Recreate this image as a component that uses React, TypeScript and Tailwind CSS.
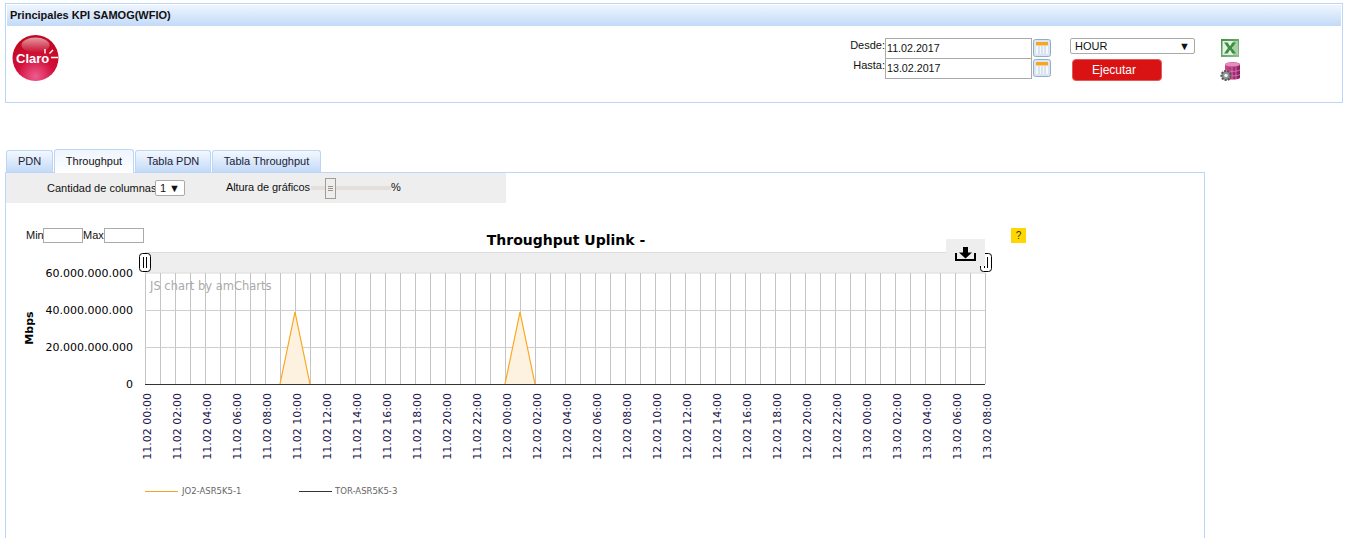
import React from "react";

const hours = ["00:00","02:00","04:00","06:00","08:00","10:00","12:00","14:00","16:00","18:00","20:00","22:00"];
const labels: string[] = [
  ...hours.map((h) => `11.02 ${h}`),
  ...hours.map((h) => `12.02 ${h}`),
  ...hours.slice(0, 5).map((h) => `13.02 ${h}`),
];
const X0 = 145;
const Y0 = 228; // page y of the top of the chart canvas
const LEFT = 6; // page x of the left of the chart canvas
const px = (x: number) => x - LEFT;
const py = (y: number) => y - Y0;

function CalIcon() {
  return (
    <svg width="18" height="18" viewBox="0 0 18 18" className="block">
      <rect x="0.5" y="0.5" width="17" height="17" rx="2" fill="#dbe6f3" stroke="#93acc9" />
      <rect x="3" y="3" width="12" height="12" fill="#f4f8fc" />
      <rect x="3" y="3" width="12" height="3.5" fill="#f5a623" />
      <path d="M6 7v8M9 7v8M12 7v8" stroke="#b9cde4" strokeWidth="1" />
    </svg>
  );
}

function ExcelIcon() {
  return (
    <svg width="18" height="18" viewBox="0 0 18 18" className="block">
      <defs>
        <linearGradient id="xlg" x1="0" x2="1" y1="0" y2="1">
          <stop offset="0" stopColor="#3f8f49" />
          <stop offset="1" stopColor="#8fbf8f" />
        </linearGradient>
      </defs>
      <rect width="18" height="18" fill="url(#xlg)" />
      <rect x="1.5" y="2" width="15" height="14" fill="#e4f0e0" />
      <path d="M12 2h4.5v14H12z" fill="#a9d0a4" />
      <path d="M3 3.5h3.6L9 7.2l2.4-3.7H15l-4 5.5 4 5.5h-3.6L9 10.8l-2.4 3.7H3l4-5.5z" fill="#3b8f46" />
    </svg>
  );
}

function DbIcon() {
  return (
    <svg width="21" height="20" viewBox="0 0 21 20" className="block">
      <defs>
        <linearGradient id="dbg" x1="0" x2="1" y1="0" y2="0">
          <stop offset="0" stopColor="#d2478f" />
          <stop offset="0.6" stopColor="#a82a76" />
          <stop offset="1" stopColor="#8a1f60" />
        </linearGradient>
      </defs>
      <path d="M5 2.5c0-3 15-3 15 0v13c0 2.8-15 2.8-15 0z" fill="url(#dbg)" />
      <ellipse cx="12.5" cy="2.5" rx="7.5" ry="2" fill="#e58cbd" />
      <path d="M12 5v12M16 5v12M5 8c3 1.8 12 1.8 15 0M5 12.5c3 1.8 12 1.8 15 0" stroke="#e6a0c8" strokeWidth="0.6" fill="none" />
      <circle cx="6" cy="13.5" r="4.6" fill="#8f8f8f" stroke="#555" strokeWidth="2" strokeDasharray="2 1.2" />
      <circle cx="6" cy="13.5" r="1.8" fill="#f0f0f0" />
    </svg>
  );
}

function ClaroLogo() {
  return (
    <svg width="48" height="48" viewBox="0 0 48 48" className="block">
      <defs>
        <radialGradient id="clg" cx="0.5" cy="0.9" r="0.8">
          <stop offset="0" stopColor="#ee5c92" />
          <stop offset="0.5" stopColor="#d3103a" />
          <stop offset="1" stopColor="#c00a22" />
        </radialGradient>
        <linearGradient id="clh" x1="0" x2="0" y1="0" y2="1">
          <stop offset="0" stopColor="#ffffff" stopOpacity="0.6" />
          <stop offset="1" stopColor="#ffffff" stopOpacity="0" />
        </linearGradient>
      </defs>
      <circle cx="23.5" cy="24" r="23" fill="url(#clg)" />
      <ellipse cx="23.5" cy="11" rx="14" ry="7.5" fill="url(#clh)" />
      <text x="4" y="29" fontFamily="'Liberation Sans', sans-serif" fontWeight="700" fontSize="13" fill="#fff">Claro</text>
      <path d="M33 15v4.5M41 16l-3.5 3.5M39 23.5h7" stroke="#fff" strokeWidth="1.4" fill="none" />
    </svg>
  );
}

function Handle({ x }: { x: number }) {
  return (
    <g transform={`translate(${px(x)} ${py(253)})`}>
      <rect x="0.5" y="0.5" width="11" height="18" rx="3" fill="#fff" stroke="#000" />
      <path d="M4.5 4v11M7.5 4v11" stroke="#000" strokeWidth="1" />
    </g>
  );
}

function Chart() {
  const font = "'DejaVu Sans', Verdana, sans-serif";
  return (
    <svg width="1020" height="300" className="block" fontFamily={font}>
      <text x={px(566)} y={py(245)} textAnchor="middle" fontSize="14" fontWeight="700" fill="#000">Throughput Uplink -</text>

      <rect x={px(145)} y={py(252)} width="840" height="21" fill="#eeeeee" />
      <path d={`M${px(145)} ${py(252.5)}h840M${px(145)} ${py(273)}h840`} stroke="#dcdcdc" strokeWidth="1" />

      {Array.from({ length: 57 }, (_, i) => (
        <path key={i} d={`M${px(X0 + i * 15) + 0.5} ${py(273)}V${py(384)}`} stroke="#c4c4c4" strokeWidth="1" />
      ))}
      {[310, 347].map((y) => (
        <path key={y} d={`M${px(145)} ${py(y) + 0.5}H${px(985)}`} stroke="#cfcfcf" strokeWidth="1" />
      ))}

      {[280, 505].map((x) => (
        <g key={x}>
          <path d={`M${px(x)} ${py(384)}L${px(x + 15)} ${py(312)}L${px(x + 30)} ${py(384)}Z`} fill="#fdf1e0" />
          <path d={`M${px(x)} ${py(384)}L${px(x + 15)} ${py(312)}L${px(x + 30)} ${py(384)}`} fill="none" stroke="#fba61c" strokeWidth="1.2" />
        </g>
      ))}
      <path d={`M${px(145)} ${py(384) + 0.5}H${px(985)}`} stroke="#333" strokeWidth="1" />

      {[["60.000.000.000", 273], ["40.000.000.000", 310], ["20.000.000.000", 347], ["0", 384]].map(([t, y]) => (
        <text key={t as string} x={px(133)} y={py(y as number) + 4} textAnchor="end" fontSize="11" fill="#000">{t}</text>
      ))}
      <text transform={`translate(${px(33)} ${py(328)}) rotate(-90)`} textAnchor="middle" fontSize="11" fontWeight="700" fill="#000">Mbps</text>
      <text x={px(150)} y={py(290)} fontSize="11.5" fill="#aaaaaa">JS chart by amCharts</text>

      {labels.map((l, i) => (
        <text key={l} transform={`translate(${px(X0 + i * 30) + 6} ${py(393)}) rotate(-90)`} textAnchor="end" fontSize="11" fill="#1c0f4d">{l}</text>
      ))}

      <Handle x={139} />
      <Handle x={980} />
      <rect x={px(946)} y={py(239)} width="39" height="27" fill="#eeeeee" />
      <path d={`M${px(963)} ${py(247)}h5v5.5h4l-6.5 6l-6.5-6h4z`} fill="#000" />
      <path d={`M${px(956)} ${py(253)}v7h19v-7`} fill="none" stroke="#000" strokeWidth="2" />

      <path d={`M${px(145)} ${py(491) + 0.5}h33`} stroke="#f5a623" strokeWidth="1" />
      <text x={px(182)} y={py(494)} fontSize="8.5" fill="#666">JO2-ASR5K5-1</text>
      <path d={`M${px(299)} ${py(491) + 0.5}h33`} stroke="#333" strokeWidth="1" />
      <text x={px(335)} y={py(494)} fontSize="8.5" fill="#666">TOR-ASR5K5-3</text>
    </svg>
  );
}

const tabs = [
  { label: "PDN", w: "w-[47px]" },
  { label: "Throughput", w: "w-[80px]", active: true },
  { label: "Tabla PDN", w: "w-[76px]" },
  { label: "Tabla Throughput", w: "w-[109px]" },
];

export default function App() {
  return (
    <div className="relative h-[538px] w-[1350px] overflow-hidden bg-white pt-[3px] font-['Liberation_Sans',Arial,sans-serif] text-[11px] text-[#111]">
      {/* Header */}
      <div className="ml-[5px] h-[100px] w-[1338px] border border-[#bcd6f7] p-px">
        <div className="flex h-[21px] items-center bg-gradient-to-b from-[#eef5fe] to-[#c3daf8] pl-[3px] font-bold text-[11px] text-[#111]">
          Principales KPI SAMOG(WFIO)
        </div>
        <div className="flex">
          <div className="ml-[5px] mt-[8px]"><ClaroLogo /></div>
          <div className="ml-[779px] mt-[12px] flex">
            <div className="flex w-[46px] flex-col items-end text-[11px]">
              <span className="h-[20px] leading-[14px]">Desde:</span>
              <span className="h-[20px] leading-[14px]">Hasta:</span>
            </div>
            <div className="flex flex-col">
              {["11.02.2017", "13.02.2017"].map((d) => (
                <div key={d} className="flex h-[20px] w-[166px] items-center gap-px">
                  <div className="flex h-[21px] w-[147px] items-center border border-[#aaaaaa] pl-[1px] text-[10.7px]">{d}</div>
                  <CalIcon />
                </div>
              ))}
            </div>
            <div className="ml-[19px] flex w-[125px] flex-col">
              <div className="flex h-[16px] w-[125px] items-center justify-between rounded-[2px] border border-[#aaaaaa] pl-[4px] pr-[4px] text-[11px]">
                <span>HOUR</span>
                <span className="text-[11px]">▼</span>
              </div>
              <div className="ml-[2px] mt-[5px] flex h-[22px] w-[90px] items-center justify-center rounded-[4px] border border-[#e25a5a] bg-[#d91313] pr-[6px] text-[12px] text-white">
                Ejecutar
              </div>
            </div>
            <div className="ml-[25px] flex flex-col">
              <div className="ml-[1px] mt-px"><ExcelIcon /></div>
              <div className="mt-[5px]"><DbIcon /></div>
            </div>
          </div>
        </div>
      </div>

      {/* Tabs */}
      <div className="relative z-10 ml-[6px] mt-[47px] flex h-[22px] items-end gap-px">
        {tabs.map((t) => (
          <div
            key={t.label}
            className={`flex items-center justify-center rounded-t-[3px] border border-[#bcd6f7] text-[11px] ${t.w} ${
              t.active
                ? "h-[24px] border-b-0 bg-gradient-to-b from-[#eef5fe] to-white -mb-px pb-[1px]"
                : "h-[22px] border-b-0 bg-gradient-to-b from-[#f4f8fe] to-[#c3daf8] text-[#1a2238]"
            }`}
          >
            {t.label}
          </div>
        ))}
      </div>

      {/* Panel */}
      <div className="ml-[5px] h-[400px] w-[1200px] border border-[#bcd6f7]">
        <div className="flex h-[30px] w-[500px] items-center bg-[#eeeeee] text-[11px]">
          <span className="ml-[41px] w-[108px] whitespace-nowrap">Cantidad de columnas</span>
          <div className="flex h-[16px] w-[30px] items-center justify-between rounded-[2px] border border-[#aaaaaa] bg-white pl-[4px] pr-[4px]">
            <span>1</span>
            <span className="text-[11px]">▼</span>
          </div>
          <span className="ml-[41px] -mt-[1px] w-[85px] whitespace-nowrap tracking-[-0.1px]">Altura de gráficos</span>
          <div className="relative h-[4px] w-[80px] bg-[#e3dfdb]">
            <div className="absolute left-[14px] top-[-8px] flex h-[21px] w-[11px] flex-col items-center justify-center gap-[1px] border border-[#a39c95] bg-[#eeeeee]">
              <span className="block h-px w-[5px] bg-[#9c948c]" />
              <span className="block h-px w-[5px] bg-[#9c948c]" />
              <span className="block h-px w-[5px] bg-[#9c948c]" />
            </div>
          </div>
          <span className="-mt-[1px]">%</span>
        </div>

        <div className="relative mt-[25px] w-[1020px]">
          <Chart />
          <div className="absolute left-[20px] top-0 flex h-[15px] items-center text-[11px]">
            <span className="w-[17px]">Min</span>
            <div className="h-[15px] w-[40px] border border-[#aaaaaa] bg-white" />
            <span className="w-[21px]">Max</span>
            <div className="h-[15px] w-[40px] border border-[#aaaaaa] bg-white" />
          </div>
          <div className="absolute left-[1005px] top-0 flex h-[15px] w-[15px] items-center justify-center bg-[#ffd700] text-[10px] text-[#333]">?</div>
        </div>
      </div>
    </div>
  );
}
